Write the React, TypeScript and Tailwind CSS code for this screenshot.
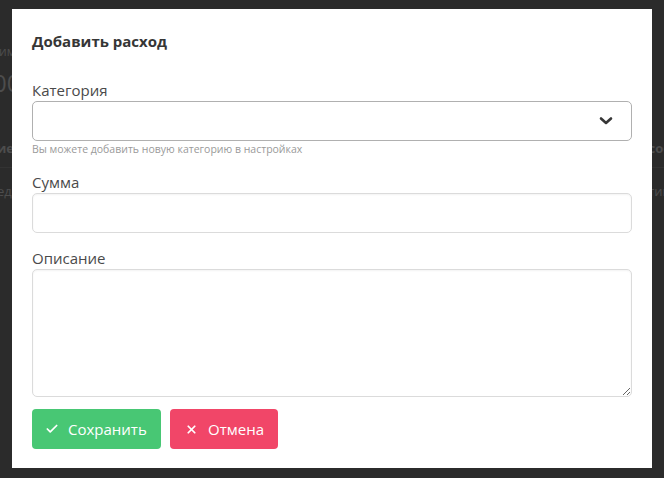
import { Check, X } from "lucide-react"

function BackgroundPage() {
  return (
    <div className="flex h-[478px] flex-col bg-[#2b2b2b] text-[#4d4d4d]">
      <div className="h-[43px]" />
      <div className="flex h-[18px] items-center text-[12px]">
        <span className="-ml-[1px]">иммарно</span>
      </div>
      <div className="flex h-[44px] items-center text-[24px] leading-none">
        <span className="-ml-[7px]">000</span>
      </div>
      <div className="h-[36px]" />
      <div className="flex h-[16px] items-center justify-between text-[13px] font-bold">
        <span className="-ml-[3px]">ие</span>
        <span className="-mr-[6px]">сос</span>
      </div>
      <div className="h-[10px]" />
      <div className="h-px bg-[#333333]" />
      <div className="h-[16px]" />
      <div className="flex h-[16px] items-center justify-between text-[13px]">
        <span className="-ml-[3px]">ед</span>
        <span className="-mr-[6px]">тив</span>
      </div>
    </div>
  )
}

function Label({ children }: { children: string }) {
  return <div className="h-[22px] text-[15px] leading-[22px] text-[#4a4a4a]">{children}</div>
}

export default function App() {
  return (
    <div
      className="relative h-[478px] w-[664px] overflow-hidden"
      style={{ fontFamily: '"Open Sans", "Noto Sans", sans-serif' }}
    >
      <BackgroundPage />

      <div className="absolute left-[12px] top-[9px] h-[459px] w-[640px] bg-white px-5 pt-5">
        <div className="h-6 text-[15px] font-bold leading-6 text-[#363636]">Добавить расход</div>

        <div className="mt-[26px]">
          <Label>Категория</Label>
          <div className="relative h-10 rounded-[5px] border border-[#b0b0b0] bg-white">
            <svg
              className="absolute right-[18px] top-[14px]"
              width="14"
              height="10"
              viewBox="0 0 14 10"
              fill="none"
            >
              <path d="M2 2.5 L7 7 L12 2.5" stroke="#363636" strokeWidth="2.6" strokeLinecap="round" strokeLinejoin="round" />
            </svg>
          </div>
          <div className="mt-[2px] h-[13px] text-[10.5px] leading-[13px] text-[#9a9a9a]">
            Вы можете добавить новую категорию в настройках
          </div>
        </div>

        <div className="mt-[15px]">
          <Label>Сумма</Label>
          <input className="block h-10 w-full rounded-[5px] border border-[#dbdbdb] px-3 text-[16px] shadow-[inset_0_1px_2px_rgba(10,10,10,0.05)] outline-none" />
        </div>

        <div className="mt-[14px]">
          <Label>Описание</Label>
          <textarea className="block h-[128px] w-full resize-y rounded-[5px] border border-[#dbdbdb] px-3 py-2 text-[16px] shadow-[inset_0_1px_2px_rgba(10,10,10,0.05)] outline-none" />
        </div>

        <div className="mt-3 flex gap-[9px]">
          <button
            type="button"
            className="flex h-10 w-[129px] items-center rounded-[4px] bg-[#48c774] pl-[13px] text-[15px] text-white"
          >
            <Check size={14} strokeWidth={3} className="mr-[9px]" />
            Сохранить
          </button>
          <button
            type="button"
            className="flex h-10 w-[108px] items-center rounded-[4px] bg-[#f14668] pl-[15px] text-[15px] text-white"
          >
            <X size={13} strokeWidth={3.2} className="mr-[10px]" />
            Отмена
          </button>
        </div>
      </div>
    </div>
  )
}
